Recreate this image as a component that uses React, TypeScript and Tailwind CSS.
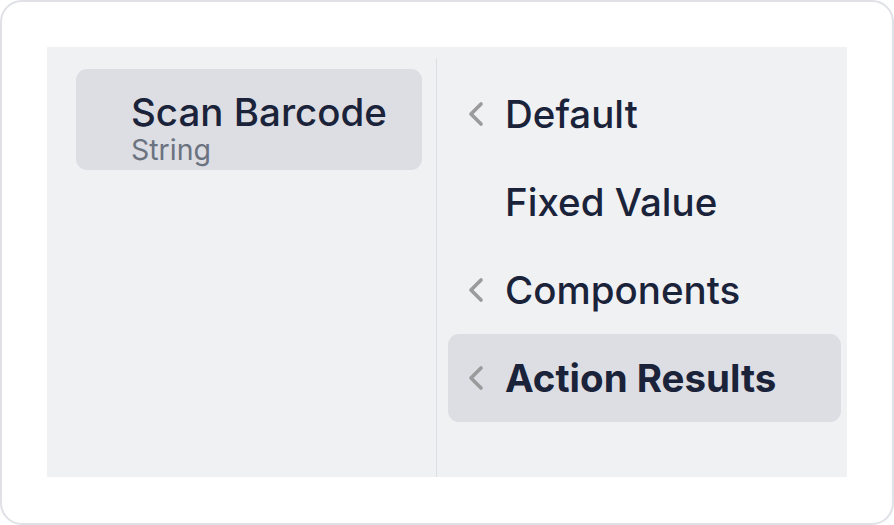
import { ChevronLeft } from "lucide-react";

const OPTIONS = [
    { label: "Default", chevron: true },
    { label: "Fixed Value", chevron: false },
    { label: "Components", chevron: true },
    { label: "Action Results", chevron: true, active: true },
];

export default function App() {
    return (
        <div className="w-[894px] h-[525px] bg-white font-['Inter',sans-serif]">
            <div className="w-full h-full rounded-[22px] border-2 border-[#dfe1e6] pt-[45px] px-[45px] pb-[46px]">
                <div className="flex h-full bg-[#f0f1f3]">
                    {/* left: picked variable */}
                    <div className="w-[389px] pt-[22px] pl-[29px] pr-[14px]">
                        <div className="h-[101px] rounded-[11px] bg-[#dddee3] pl-[55px] pt-[22px]">
                            <div className="text-[38.5px] leading-[42px] font-medium text-[#1a2339]">Scan Barcode</div>
                            <div className="text-[28.5px] leading-[28px] text-[#6b7280] mt-[3px]">String</div>
                        </div>
                    </div>

                    {/* right: value sources */}
                    <div className="flex-1 flex">
                        <div className="w-[1px] mt-[11px] bg-[#dcdee2]" />
                        <div className="flex-1 pt-[23px] pl-[11px] pr-[6px]">
                            {OPTIONS.map((o) => (
                                <div
                                    key={o.label}
                                    className={
                                        "h-[88px] flex items-center rounded-[11px] " +
                                        (o.active ? "bg-[#dddee3]" : "")
                                    }
                                >
                                    <div className="w-[57px] flex justify-end pr-[9px]">
                                        {o.chevron && (
                                            <ChevronLeft className="w-[40px] h-[40px] text-[#9b9b9e]" strokeWidth={2.2} />
                                        )}
                                    </div>
                                    <span
                                        className={
                                            "text-[38.5px] leading-none text-[#1a2339] " +
                                            (o.active ? "font-bold" : "font-medium")
                                        }
                                    >
                                        {o.label}
                                    </span>
                                </div>
                            ))}
                        </div>
                    </div>
                </div>
            </div>
        </div>
    );
}
